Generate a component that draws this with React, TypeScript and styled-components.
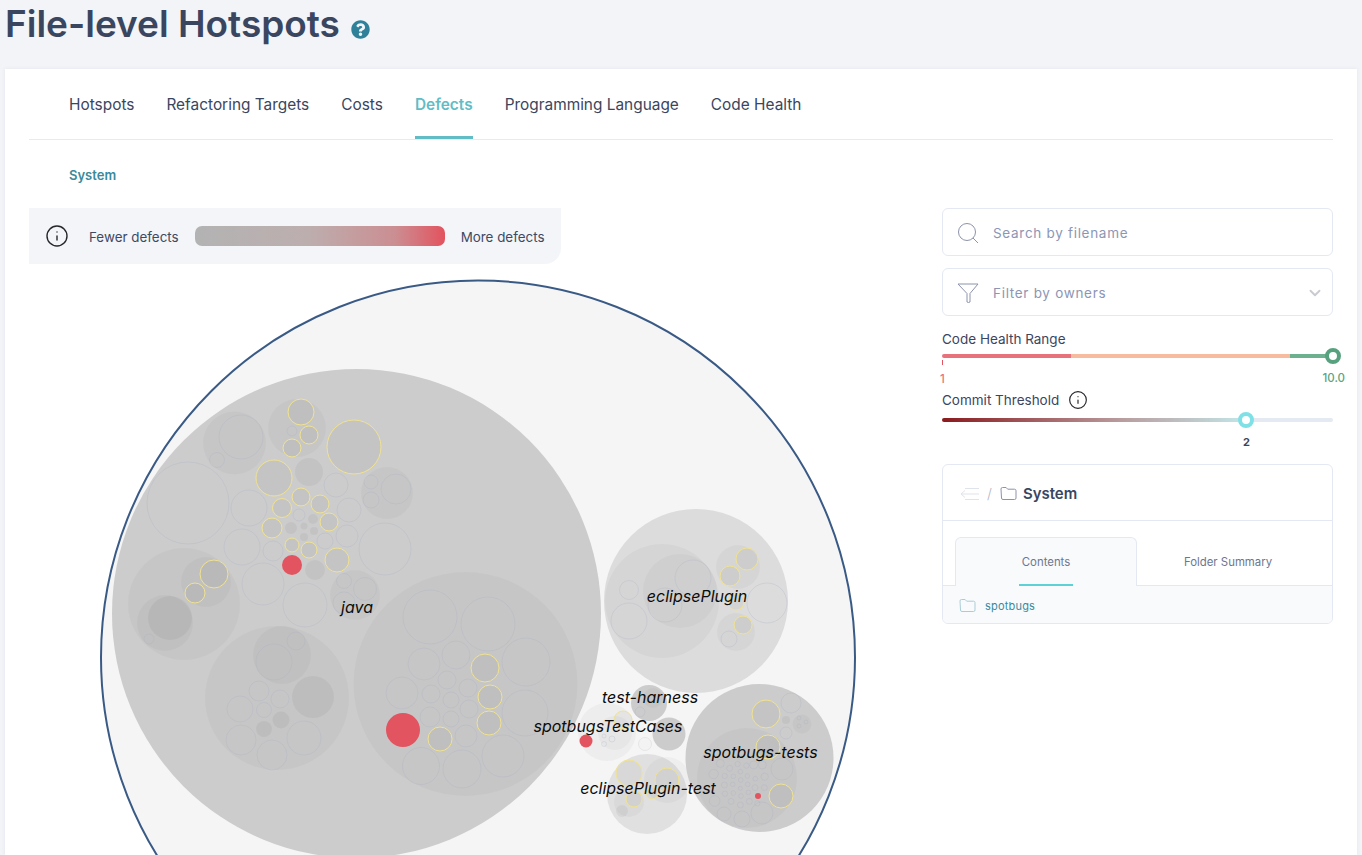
import React from 'react'
import styled, { createGlobalStyle, css } from 'styled-components'
import { FaQuestionCircle } from 'react-icons/fa'
import { ChevronDown, Info } from 'lucide-react'

const GlobalStyle = createGlobalStyle`
  html, body {
    margin: 0;
    padding: 0;
    height: 100%;
    overflow: hidden;
    background: #f2f4f8;
    font-family: Inter, "Liberation Sans", sans-serif;
    color: #3a4660;
  }
  * { box-sizing: border-box; }
`

const Page = styled.div`
  width: 1362px;
  height: 855px;
  overflow: hidden;
`

const TitleRow = styled.header`
  height: 69px;
  padding: 0 0 0 5px;
  display: flex;
  align-items: flex-start;
  gap: 11px;
`

const Title = styled.h1`
  margin: 2px 0 0;
  font-size: 37px;
  line-height: 44px;
  font-weight: 600;
  color: #3a4660;
`

const HelpIcon = styled(FaQuestionCircle)`
  width: 19px;
  height: 19px;
  margin-top: 20px;
  color: #2f8199;
`

const Card = styled.main`
  margin: 0 5px;
  height: 786px;
  padding: 0 24px;
  background: #fff;
  box-shadow: 0 0 4px rgba(60, 70, 100, 0.08);
`

const TabBar = styled.nav`
  height: 71px;
  padding: 0 0 0 40px;
  display: flex;
  gap: 32px;
  border-bottom: 1px solid #e7eaf0;
`

const Tab = styled.a<{ $active?: boolean }>`
  height: 70px;
  line-height: 71px;
  font-size: 15.42px;
  white-space: nowrap;
  color: #3a4660;
  ${p =>
    p.$active &&
    css`
      color: #62bcc6;
      font-weight: 600;
      box-shadow: inset 0 -3px 0 #62bcc6;
    `}
`

const Crumb = styled.div`
  height: 68px;
  padding: 27px 0 0 40px;
  font-size: 13px;
  line-height: 16px;
  font-weight: 600;
  color: #3a8a9b;
`

const Columns = styled.div`
  display: grid;
  grid-template-columns: 913px 391px;
`

const ChartColumn = styled.section`
  min-width: 0;
`

const Legend = styled.div`
  width: 532px;
  height: 56px;
  padding: 0 16px;
  display: flex;
  align-items: center;
  background: #f3f5f9;
  border-bottom-right-radius: 16px;
  font-size: 13.4px;
  color: #3f4a62;
`

const InfoIcon = styled(Info)<{ $size: number }>`
  width: ${p => p.$size}px;
  height: ${p => p.$size}px;
  color: #26262c;
  stroke-width: 1.4;
  flex: none;
`

const LegendText = styled.span`
  white-space: nowrap;
  margin: 1px 0 0 20px;
`

const LegendBar = styled.div`
  width: 250px;
  height: 20px;
  margin: 0 16px;
  border-radius: 7px;
  flex: none;
  background: linear-gradient(90deg, #b3b3b3 0%, #bdaeae 45%, #cb8e92 80%, #e2535f 100%);
`

const MoreText = styled.span`
  white-space: nowrap;
  margin-top: 1px;
`

const ChartSvg = styled.svg`
  display: block;
  width: 913px;
  height: 591px;
`

const Outer = styled.circle`
  fill: #f5f5f5;
  stroke: #3a5a86;
  stroke-width: 2;
`

const kinds = {
  top: css`fill: #cccccc;`,
  light: css`fill: #dcdcdc;`,
  pale: css`fill: #ededed;`,
  mid: css`fill: #e0e0e0;`,
  folder: css`fill: rgba(0, 0, 0, 0.028);`,
  leaf: css`fill: none; stroke: rgba(165, 172, 195, 0.27); stroke-width: 1;`,
  dark: css`fill: rgba(0, 0, 0, 0.045);`,
  yellow: css`fill: rgba(0, 0, 0, 0.035); stroke: #f0e28f; stroke-width: 1;`,
  red: css`fill: #e2545f;`,
  white: css`fill: #f3f3f3; stroke: #e6e6e8; stroke-width: 1;`,
}

type Kind = keyof typeof kinds

const Bubble = styled.circle<{ $kind: Kind }>`
  ${p => kinds[p.$kind]}
`

const Label = styled.text`
  font-family: Inter, "Liberation Sans", sans-serif;
  font-style: italic;
  font-size: 16px;
  fill: #0c0c0c;
  text-anchor: middle;
`

const bubbles: [Kind, number, number, number][] = [
  // java
  ['top', 356.5, 613.5, 244.5],
  ['folder', 234.5, 443, 31.5], ['leaf', 241, 437, 22], ['leaf', 217, 460, 7.5],
  ['folder', 297, 428, 29], ['yellow', 301, 412, 13], ['leaf', 292, 431, 5], ['yellow', 309, 435, 9], ['yellow', 292, 448, 9],
  ['yellow', 354, 447, 27], ['leaf', 188, 503, 41], ['yellow', 274, 478, 18], ['dark', 309, 472, 14], ['leaf', 336, 485, 12],
  ['folder', 387, 493, 26], ['leaf', 396, 489, 15], ['leaf', 371, 482, 7], ['leaf', 371, 500, 8],
  ['leaf', 249, 508, 18], ['yellow', 301, 497, 9], ['yellow', 282, 508, 9.5], ['yellow', 320, 504, 9], ['leaf', 349, 510, 12],
  ['leaf', 299, 515, 6], ['dark', 313, 519, 5], ['yellow', 329, 522, 9], ['yellow', 272, 528, 10], ['dark', 291, 528, 6],
  ['dark', 304, 526, 3.5], ['dark', 314, 531, 4], ['dark', 304, 537, 4], ['leaf', 347, 536, 11], ['leaf', 385, 549, 26],
  ['leaf', 242, 547, 18], ['leaf', 273, 551, 10], ['yellow', 292, 545, 7], ['yellow', 309, 550, 8], ['leaf', 325, 541, 8],
  ['yellow', 337, 560, 12], ['red', 292, 565, 10], ['dark', 315, 570, 10], ['leaf', 263, 584, 21], ['leaf', 305, 605, 22],
  ['folder', 355, 595, 25], ['leaf', 344, 581, 7.5], ['leaf', 365, 589, 11.5], ['leaf', 344, 603, 11],
  ['folder', 184, 604, 56], ['folder', 206, 582, 25], ['yellow', 214, 574, 14], ['yellow', 195, 593, 10],
  ['folder', 165, 623, 28], ['dark', 170, 618, 22], ['leaf', 149, 639, 5],
  ['folder', 277, 698, 72], ['folder', 282, 655, 29], ['leaf', 274, 662, 18], ['leaf', 296, 641, 9], ['dark', 313, 697, 21],
  ['leaf', 259, 691, 10], ['leaf', 280, 699, 9], ['leaf', 240, 709, 13], ['leaf', 264, 710, 7.5], ['dark', 281, 720, 8.5],
  ['dark', 264, 729, 8], ['leaf', 241, 740, 15], ['leaf', 272, 755, 15], ['leaf', 304, 738, 17],
  ['folder', 465.5, 684, 112], ['leaf', 430, 617, 27], ['leaf', 488, 624, 27], ['leaf', 526, 662, 24], ['leaf', 424, 664, 16],
  ['leaf', 456, 655, 14], ['yellow', 485, 668, 14], ['leaf', 447, 680, 9], ['leaf', 468, 688, 9], ['yellow', 490, 697, 12],
  ['leaf', 402, 693, 16], ['leaf', 431, 694, 9], ['leaf', 451, 700, 8], ['leaf', 469, 709, 9], ['yellow', 489, 723, 12],
  ['leaf', 525, 713, 23], ['leaf', 430, 717, 10], ['leaf', 451, 719, 8], ['red', 403, 730, 17], ['yellow', 440, 739, 12],
  ['leaf', 466, 736, 11], ['leaf', 503, 756, 21], ['leaf', 421, 766, 18.5], ['leaf', 462, 769, 19],
  // eclipsePlugin
  ['light', 696, 601, 92], ['folder', 662, 601, 57], ['folder', 680, 591, 37], ['leaf', 693, 578, 18], ['leaf', 665, 605, 17],
  ['leaf', 629, 590, 9.5], ['leaf', 629, 621, 18], ['folder', 738, 567, 22], ['yellow', 747, 559, 11], ['yellow', 730, 576, 10],
  ['yellow', 736, 602, 8], ['leaf', 767, 603, 20], ['folder', 736, 632, 19], ['yellow', 743, 625, 9], ['leaf', 729, 639, 8],
  // test-harness
  ['top', 649, 703, 18], ['folder', 653, 698, 10], ['leaf', 640, 712, 5],
  // spotbugsTestCases
  ['pale', 607, 732, 29], ['folder', 615, 733, 17], ['yellow', 623, 720, 9], ['leaf', 612, 739, 3], ['leaf', 604, 736, 2], ['leaf', 604, 744, 2.5],
  ['red', 586, 741, 6.5],
  ['top', 669, 734, 16.5], ['white', 645, 744, 6.5],
  // eclipsePlugin-test
  ['mid', 647, 794, 40], ['folder', 667, 780, 23], ['yellow', 667, 780, 12], ['yellow', 629, 773, 13], ['yellow', 652, 793, 6],
  ['folder', 629, 802, 15], ['yellow', 634, 799, 8], ['dark', 622, 811, 6],
  // spotbugs-tests
  ['top', 759.5, 758, 74], ['yellow', 766, 714, 14], ['leaf', 791, 703, 10], ['dark', 786, 720, 4], ['folder', 802, 724, 9.5],
  ['leaf', 799, 718, 2], ['leaf', 806, 722, 2], ['leaf', 799, 726, 2], ['leaf', 786, 733, 6],
  ['folder', 747, 778, 50], ['yellow', 768, 747, 12], ['leaf', 782, 769, 11], ['yellow', 781, 796, 12], ['red', 758, 796, 3],
  ['leaf', 762, 813, 11], ['leaf', 742, 819, 8], ['leaf', 724, 814, 7],
]

// the dense little files inside spotbugs-tests, in zoomed crop units
const tinyFiles: [number, number, number][] = [
  [601, 790, 12], [581, 822, 14], [629, 805, 9], [653, 792, 8], [679, 797, 8], [701, 795, 12], [727, 795, 12],
  [614, 828, 8], [640, 829, 7], [661, 815, 7], [682, 828, 7], [706, 836, 7], [734, 830, 11], [613, 855, 9],
  [638, 853, 7], [662, 840, 7], [683, 853, 7], [661, 865, 6], [705, 863, 9], [733, 863, 9], [615, 881, 8],
  [640, 879, 7], [663, 888, 7], [685, 877, 7], [584, 903, 16], [633, 904, 9], [661, 915, 9], [688, 904, 9], [712, 910, 8],
]

const labels: [string, number, number][] = [
  ['java', 357, 613],
  ['eclipsePlugin', 697, 602],
  ['test-harness', 650, 703],
  ['spotbugsTestCases', 608, 732],
  ['spotbugs-tests', 760.5, 758],
  ['eclipsePlugin-test', 648, 794],
]

const Side = styled.aside`
  display: flex;
  flex-direction: column;
`

const Field = styled.div`
  height: 48px;
  margin-bottom: 12px;
  padding: 1px 8px 0 14px;
  display: flex;
  align-items: center;
  gap: 14px;
  border: 1px solid #e4e8f2;
  border-radius: 6px;
  font-size: 13.5px;
  letter-spacing: 0.7px;
  color: #8c96b4;
`

const FieldText = styled.span`
  flex: 1;
`

const FieldIcon = styled.svg`
  width: 22px;
  height: 22px;
  flex: none;
  fill: none;
  stroke: #8c93ac;
  stroke-width: 1;
`

const Chevron = styled(ChevronDown)`
  width: 18px;
  height: 18px;
  color: #c9cbd0;
  stroke-width: 2.5;
`

const SliderLabel = styled.div`
  display: flex;
  align-items: center;
  gap: 9px;
  height: 21px;
  font-size: 13.5px;
  color: #3a4660;
`

const Track = styled.div<{ $bg: string; $gap: number }>`
  position: relative;
  height: 4px;
  margin-top: ${p => p.$gap}px;
  background: ${p => p.$bg};
  border-radius: 2px;
`

const Knob = styled.span<{ $color: string; $left: string }>`
  position: absolute;
  top: -6px;
  left: ${p => p.$left};
  width: 16px;
  height: 16px;
  margin-left: -8px;
  border-radius: 50%;
  background: #fff;
  border: 4px solid ${p => p.$color};
`

const Tick = styled.span`
  position: absolute;
  top: 6px;
  left: 0;
  width: 1px;
  height: 5px;
  background: #e2545f;
`

const Scale = styled.div`
  height: 31px;
  position: relative;
  font-size: 11.5px;
  font-weight: 500;
`

const ScaleMin = styled.span`
  position: absolute;
  top: 14px;
  left: -2px;
  color: #e8727c;
`

const ScaleMax = styled.span`
  position: absolute;
  top: 13px;
  right: -12px;
  color: #5aa582;
`

const ThresholdValue = styled.div`
  height: 26px;
  padding: 13px 0 0 301px;
  font-size: 11px;
  font-weight: 700;
  color: #3a4660;
`

const Panel = styled.div`
  height: 160px;
  margin-top: 16px;
  border: 1px solid #e4e8f2;
  border-radius: 6px;
  overflow: hidden;
`

const PanelHead = styled.div`
  height: 56px;
  padding: 2px 17px 0;
  display: flex;
  align-items: center;
  border-bottom: 1px solid #e4e8f2;
  font-size: 15px;
  font-weight: 600;
  color: #3a4660;
`

const BackIcon = styled.svg`
  width: 20px;
  height: 14px;
  fill: none;
  stroke: #dfe3ec;
  stroke-width: 1;
`

const Slash = styled.span`
  margin: 0 8px 0 7px;
  font-size: 14px;
  font-weight: 300;
  color: #b0b6c6;
`

const FolderIcon = styled.svg<{ $color: string; $gap: number }>`
  width: 17px;
  height: 15px;
  margin-right: ${p => p.$gap}px;
  flex: none;
  fill: none;
  stroke: ${p => p.$color};
  stroke-width: 1;
`

const PanelTabs = styled.div`
  height: 65px;
  padding: 16px 0 0 12px;
  display: flex;
  border-bottom: 1px solid #e4e8f2;
`

const PanelTab = styled.div<{ $active?: boolean }>`
  width: 182px;
  height: 49px;
  padding-top: 18px;
  text-align: center;
  font-size: 11.4px;
  line-height: 14px;
  color: #6d7690;
  ${p =>
    p.$active &&
    css`
      padding-top: 17px;
      background: #f9fafc;
      border: 1px solid #e4e8f2;
      border-bottom: none;
      border-radius: 6px 6px 0 0;
    `}
`

const TabUnderline = styled.div`
  width: 54px;
  height: 2px;
  margin: 15px auto 0;
  background: #5cd2d6;
`

const PanelBody = styled.div`
  height: 37px;
  padding: 2px 0 0 16px;
  display: flex;
  align-items: center;
  background: #f9fafc;
  font-size: 11px;
  letter-spacing: 0.2px;
  color: #3a8a9b;
`

const Folder = ({ color, gap }: { color: string; gap: number }) => (
  <FolderIcon $color={color} $gap={gap} viewBox="0 0 17 15">
    <path d="M1 3a1.5 1.5 0 0 1 1.5-1.5h3.6l1.6 1.7h6.8a1.5 1.5 0 0 1 1.5 1.5v7.3a1.5 1.5 0 0 1-1.5 1.5h-11.5a1.5 1.5 0 0 1-1.5-1.5z" />
  </FolderIcon>
)

export default function App() {
  return (
    <Page>
      <GlobalStyle />
      <TitleRow>
        <Title>File-level Hotspots</Title>
        <HelpIcon />
      </TitleRow>
      <Card>
        <TabBar>
          <Tab>Hotspots</Tab>
          <Tab>Refactoring Targets</Tab>
          <Tab>Costs</Tab>
          <Tab $active>Defects</Tab>
          <Tab>Programming Language</Tab>
          <Tab>Code Health</Tab>
        </TabBar>
        <Crumb>System</Crumb>
        <Columns>
          <ChartColumn>
            <Legend>
              <InfoIcon $size={24} />
              <LegendText>Fewer defects</LegendText>
              <LegendBar />
              <MoreText>More defects</MoreText>
            </Legend>
            <ChartSvg viewBox="29 264 913 591">
              <Outer cx={478} cy={657.5} r={377} />
              {bubbles.map(([kind, cx, cy, r], i) => (
                <Bubble key={i} $kind={kind} cx={cx} cy={cy} r={r} />
              ))}
              {tinyFiles.map(([x, y, r], i) => (
                <Bubble key={i} $kind="leaf" cx={520 + x / 3} cy={500 + y / 3} r={r / 3} />
              ))}
              {labels.map(([text, x, y]) => (
                <Label key={text} x={x} y={y}>
                  {text}
                </Label>
              ))}
            </ChartSvg>
          </ChartColumn>
          <Side>
            <Field>
              <FieldIcon viewBox="0 0 22 22">
                <circle cx="10" cy="10" r="8.5" />
                <path d="M16 16l5 5" />
              </FieldIcon>
              <FieldText>Search by filename</FieldText>
            </Field>
            <Field>
              <FieldIcon viewBox="0 0 22 22">
                <path d="M1 2h20l-8 9.5v8.5q-1.5 1-3 0v-8.5z" />
              </FieldIcon>
              <FieldText>Filter by owners</FieldText>
              <Chevron />
            </Field>
            <SliderLabel>Code Health Range</SliderLabel>
            <Track $gap={5} $bg="linear-gradient(90deg, #e8727c 0 33%, #f7bb9f 33% 89%, #6cb08f 89% 100%)">
              <Knob $color="#57a17f" $left="100%" />
              <Tick />
            </Track>
            <Scale>
              <ScaleMin>1</ScaleMin>
              <ScaleMax>10.0</ScaleMax>
            </Scale>
            <SliderLabel>
              Commit Threshold
              <InfoIcon $size={20} />
            </SliderLabel>
            <Track $gap={8} $bg="linear-gradient(90deg, #8a1a1e 0%, #b89a9c 45%, #c3e6e8 77.7%, #e4e9f2 77.7% 100%)">
              <Knob $color="#7fe0e6" $left="77.7%" />
            </Track>
            <ThresholdValue>2</ThresholdValue>
            <Panel>
              <PanelHead>
                <BackIcon viewBox="0 0 20 14">
                  <path d="M5 1.5h14M1 7h18M5 12.5h14M5 3.5L1 7l4 3.5" />
                </BackIcon>
                <Slash>/</Slash>
                <Folder color="#8c93ac" gap={6} />
                System
              </PanelHead>
              <PanelTabs>
                <PanelTab $active>
                  Contents
                  <TabUnderline />
                </PanelTab>
                <PanelTab>Folder Summary</PanelTab>
              </PanelTabs>
              <PanelBody>
                <Folder color="#a9cdd6" gap={9} />
                spotbugs
              </PanelBody>
            </Panel>
          </Side>
        </Columns>
      </Card>
    </Page>
  )
}
